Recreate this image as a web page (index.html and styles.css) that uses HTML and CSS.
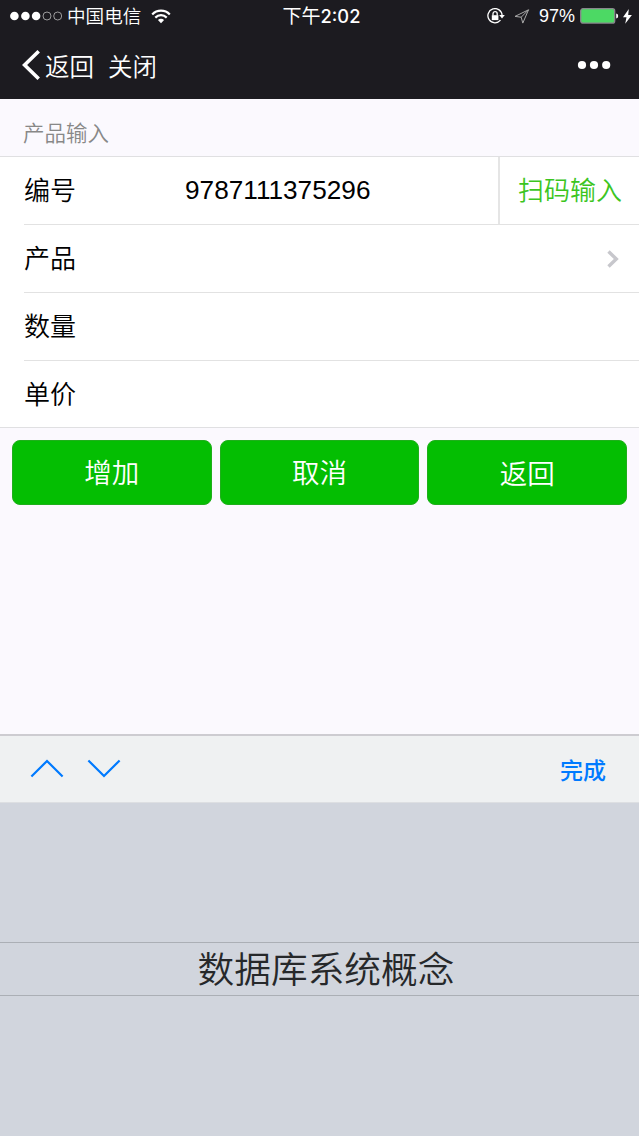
FILE: index.html
```html
<!DOCTYPE html>
<html lang="zh-CN">
<head>
    <meta charset="UTF-8">
    <meta name="viewport" content="width=device-width, initial-scale=1.0">
    <title>产品输入</title>
    <link rel="stylesheet" href="styles.css">
</head>
<body>
    <header class="top">
        <div class="status-bar">
            <div class="status-left">
                <svg class="signal" width="52" height="10" viewBox="0 0 52 10" fill="#fff">
                    <circle cx="4.4" cy="5" r="4.3"></circle>
                    <circle cx="15.4" cy="5" r="4.3"></circle>
                    <circle cx="26.1" cy="5" r="4.3"></circle>
                    <circle cx="37" cy="5" r="4" fill="none" stroke="#bbb" stroke-width="0.8"></circle>
                    <circle cx="47.7" cy="5" r="4" fill="none" stroke="#bbb" stroke-width="0.8"></circle>
                </svg>
                <span class="carrier">中国电信</span>
                <svg class="wifi" width="20" height="15" viewBox="0 0 20 15" fill="none" stroke="#fff" stroke-width="2.2">
                    <path d="M1.2 5.4C6 .4 14 .4 18.8 5.4"></path>
                    <path d="M4.3 8.6C7.5 5.4 12.5 5.4 15.7 8.6"></path>
                    <path d="M10 14.2L6.9 11C8.6 9.3 11.4 9.3 13.1 11z" fill="#fff" stroke="none"></path>
                </svg>
            </div>
            <div class="clock">下午<span class="clock-digits">2:02</span></div>
            <div class="status-right">
                <svg width="18" height="16" viewBox="0 0 18 16" fill="none" stroke="#fff" stroke-width="1.3">
                    <path d="M13.5 12.2A7.1 7.1 0 1 1 15.1 7.5"></path>
                    <path d="M12.2 7h5.6L15 10.4z" fill="#fff" stroke="none"></path>
                    <rect x="4.8" y="7.2" width="6.6" height="4.9" fill="#fff" stroke="none"></rect>
                    <path d="M6 7.4V5.8a2.1 2.1 0 0 1 4.2 0v1.6"></path>
                </svg>
                <svg class="location" width="16" height="15" viewBox="0 0 16 15" fill="none" stroke="#aaa" stroke-width="1">
                    <path d="M14.5 .8L1 7.4l6.2.8 1.6 5.9z"></path>
                    <path d="M14.5 .8L7.2 8.2"></path>
                </svg>
                <span class="percent">97%</span>
                <svg width="39" height="16" viewBox="0 0 39 16">
                    <rect x=".7" y=".7" width="34" height="14.4" rx="2.2" fill="#4cd964" stroke="#88868c" stroke-width="1.3"></rect>
                    <path d="M36.2 5.4q2 .4 2 2.5t-2 2.5z" fill="#fff"></path>
                </svg>
                <svg class="bolt" width="9" height="15" viewBox="0 0 9 15" fill="#fff">
                    <path d="M5.8 0L0 8.2h3.5L2.2 14.8 8.9 6H5.2z"></path>
                </svg>
            </div>
        </div>
        <nav class="nav-bar">
            <svg class="back-arrow" width="18" height="30" viewBox="0 0 18 30" fill="none" stroke="#fff" stroke-width="3.6">
                <path d="M16.7 1.3L2.6 15 16.7 28.7"></path>
            </svg>
            <a class="nav-link">返回</a>
            <a class="nav-link">关闭</a>
            <svg class="more" width="34" height="10" viewBox="0 0 34 10" fill="#fff">
                <circle cx="5" cy="5" r="4.1"></circle>
                <circle cx="17" cy="5" r="4.1"></circle>
                <circle cx="29.2" cy="5" r="4.1"></circle>
            </svg>
        </nav>
    </header>

    <main class="page">
        <h2 class="cells-title">产品输入</h2>
        <div class="cells">
            <div class="cell">
                <label class="label">编号</label>
                <span class="value">9787111375296</span>
                <a class="scan">扫码输入</a>
            </div>
            <div class="cell">
                <label class="label">产品</label>
                <svg class="chevron" width="12" height="18" viewBox="0 0 12 18" fill="none" stroke="#c7c7cc" stroke-width="3.4">
                    <path d="M1.5 1.5L9.3 9 1.5 16.5"></path>
                </svg>
            </div>
            <div class="cell">
                <label class="label">数量</label>
            </div>
            <div class="cell">
                <label class="label">单价</label>
            </div>
        </div>
        <div class="buttons">
            <button class="btn">增加</button>
            <button class="btn">取消</button>
            <button class="btn btn-back">返回</button>
        </div>
    </main>

    <section class="keyboard">
        <div class="toolbar">
            <svg width="34" height="20" viewBox="0 0 34 20" fill="none" stroke="#007aff" stroke-width="2.2">
                <path d="M1.4 17.5L17 2l15.6 15.5"></path>
            </svg>
            <svg class="next" width="34" height="20" viewBox="0 0 34 20" fill="none" stroke="#007aff" stroke-width="2.2">
                <path d="M1.4 1.5L17 17 32.6 1.5"></path>
            </svg>
            <a class="done">完成</a>
        </div>
        <div class="picker">
            <div class="picker-item">数据库系统概念</div>
        </div>
    </section>
</body>
</html>
```

FILE: styles.css
```css
/* General Styles */
* {
    box-sizing: border-box;
}

body {
    margin: 0;
    height: 1136px;
    display: flex;
    flex-direction: column;
    overflow: hidden;
    font-family: "Liberation Sans", "Noto Sans CJK SC", sans-serif;
    font-weight: 350;
    background: #fbf9fe;
    color: #000;
}

svg {
    display: block;
    flex: none;
}

/* Status bar and navigation */
.top {
    height: 99px;
    background: #1c1b20;
    color: #fff;
}

.status-bar {
    height: 32px;
    padding: 0 7px 0 10px;
    display: grid;
    grid-template-columns: 1fr auto 1fr;
    grid-template-rows: 32px;
    align-items: center;
}

.status-left,
.status-right {
    display: flex;
    align-items: center;
}

.status-right {
    justify-content: flex-end;
}

.carrier {
    margin-left: 5px;
    padding-top: 2px;
    font-size: 18.6px;
    line-height: 30px;
}

.wifi {
    margin-left: 10px;
}

.clock {
    padding: 2px 0 0 1px;
    font-size: 19px;
    font-weight: 400;
    line-height: 30px;
}

.clock-digits {
    font-family: Inter, sans-serif;
    font-size: 18.3px;
    font-weight: 500;
    line-height: 1;
}

.location {
    margin-left: 9px;
}

.percent {
    margin: 0 5px 0 9px;
    padding-top: 1px;
    font-size: 18px;
    font-weight: 400;
}

.bolt {
    margin-left: 4px;
}

.nav-bar {
    height: 67px;
    padding: 0 28px 1px 22px;
    display: flex;
    align-items: center;
}

.nav-link {
    margin-left: 5px;
    font-size: 24.5px;
}

.nav-link + .nav-link {
    margin-left: 14px;
}

.more {
    margin-left: auto;
}

/* Form */
.page {
    flex: 1;
}

.cells-title {
    margin: 0;
    height: 57px;
    padding: 19px 23px 0;
    font-size: 21.5px;
    line-height: 32px;
    font-weight: 350;
    color: #888;
}

.cells {
    padding-left: 24px;
    background: #fff;
    border-top: 1px solid #e0e0e2;
    border-bottom: 1px solid #e0e0e2;
}

.cell {
    height: 68px;
    display: flex;
    align-items: center;
    border-bottom: 1px solid #e2e2e2;
    font-size: 26px;
}

.cell:last-child {
    height: 66px;
    border-bottom: none;
}

.label {
    width: 161px;
    padding-bottom: 4px;
}

.value {
    font-size: 26.2px;
    font-weight: 400;
}

.scan {
    margin-left: auto;
    width: 141px;
    height: 67px;
    padding: 1px 0 0 18px;
    border-left: 2px solid #e5e5e5;
    line-height: 67px;
    color: #3cc51f;
}

.chevron {
    margin: 1px 20px 0 auto;
}

.buttons {
    padding: 12px;
    display: flex;
    gap: 8px;
}

.btn {
    flex: 1;
    height: 65px;
    padding: 0 0 4px;
    border: 1px solid #1faf1b;
    border-radius: 8px;
    background: #04be02;
    color: #fff;
    font-family: inherit;
    font-size: 27.5px;
    font-weight: 350;
}

.btn-back {
    padding-bottom: 1px;
}

/* Picker */
.toolbar {
    height: 69px;
    padding: 0 33px 0 30px;
    display: flex;
    align-items: center;
    background: #eff1f2;
    border-top: 2px solid #cdccd1;
    border-bottom: 1px solid #dddfe2;
}

.next {
    margin-left: 23px;
}

.done {
    margin-left: auto;
    font-size: 23px;
    font-weight: 500;
    color: #007aff;
}

.picker {
    height: 333px;
    padding-top: 139px;
    background: #d1d5dd;
}

.picker-item {
    height: 54px;
    padding: 1px 0 0 13px;
    border-top: 1px solid #abafb5;
    border-bottom: 1px solid #abafb5;
    text-align: center;
    font-size: 36.7px;
    line-height: 53px;
    color: #26282a;
}
```
